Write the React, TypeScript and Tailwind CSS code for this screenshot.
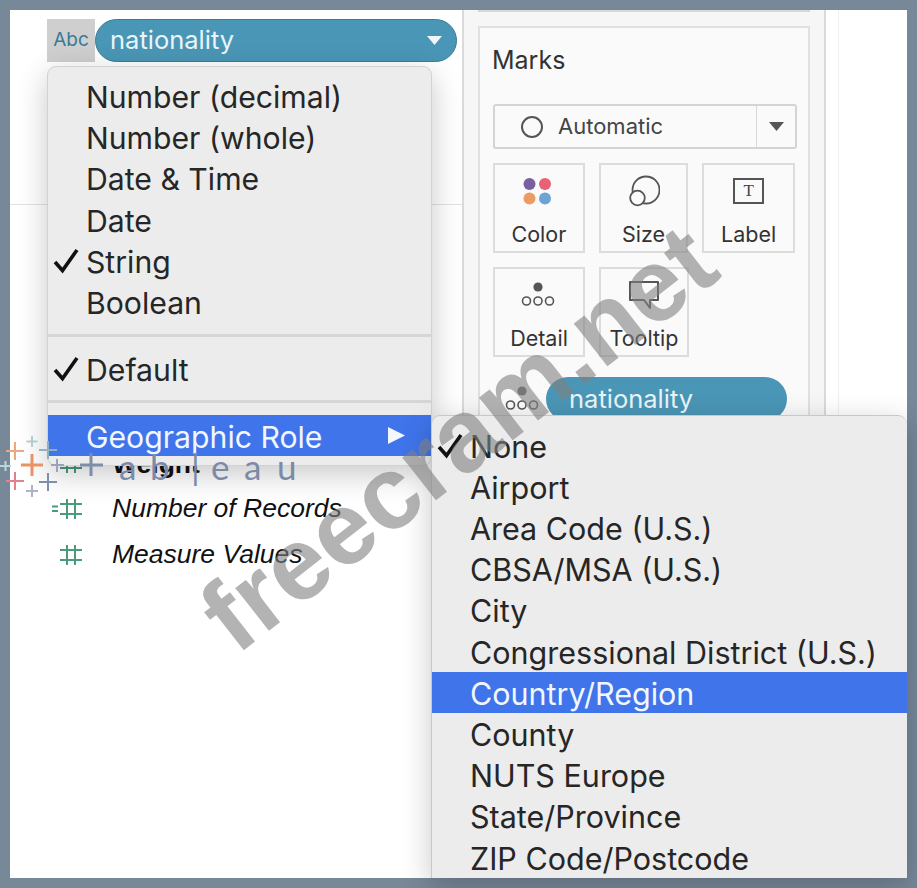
const inter = "font-['Inter','Liberation_Sans',sans-serif]";

function Hash({ withEq = false }: { withEq?: boolean }) {
  return (
    <svg width="32" height="24" viewBox="0 0 32 24" fill="none" stroke="#4a9a7c" strokeWidth="2">
      {withEq && <path d="M0 9.5h6M0 14h6" stroke="#4a9a7c" strokeWidth="1.8" />}
      <path d="M8 7h22M8 17h22M15 2v20M23 2v20" />
    </svg>
  );
}

function Tick({ size = 28 }: { size?: number }) {
  return (
    <svg width={size} height={size} viewBox="0 0 28 28" fill="none" stroke="#111" strokeWidth="3.6">
      <path d="M3 15l7.5 8.5L25 3" />
    </svg>
  );
}

function DetailIcon({ dark = "#555" }: { dark?: string }) {
  return (
    <svg width="36" height="28" viewBox="0 0 36 28" fill="none" stroke="#555" strokeWidth="1.6">
      <circle cx="18" cy="6" r="4.6" fill={dark} stroke="none" />
      <circle cx="6.500" cy="20" r="4" />
      <circle cx="18" cy="20" r="4" />
      <circle cx="29.500" cy="20" r="4" />
    </svg>
  );
}

function MarkButton({ label, icon, w, nudge }: { label: string; icon: React.ReactNode; w: string; nudge?: boolean }) {
  return (
    <div className={`${w} h-[90px] border-2 border-[#dcdcdc] flex flex-col items-center pt-[7px]`}>
      <div className={`h-[38px] flex items-center justify-center ${nudge ? "-ml-[3px]" : ""}`}>{icon}</div>
      <div className="text-[21.500px] leading-[30px] text-[#333] mt-[9px]">{label}</div>
    </div>
  );
}

function MenuItem({ label, tick, active, arrow, size = "text-[30.200px]", textTop = "pt-[4px]" }: { label: string; tick?: boolean; active?: boolean; arrow?: boolean; size?: string; textTop?: string }) {
  return (
    <div className={`relative h-[41.2px] flex items-center pl-[38px] pr-[26px] ${size} whitespace-nowrap ${active ? "bg-[#3f74ea] text-[#f2f6ff]" : "text-[#262626]"}`}>
      {tick && <span className="absolute left-[4px] top-[7px]"><Tick /></span>}
      <span className={`flex-1 ${textTop}`}>{label}</span>
      {arrow && (
        <svg width="17" height="17" viewBox="0 0 17 17" fill="#f4f7ff"><path d="M0 0l17 8.500L0 17z" /></svg>
      )}
    </div>
  );
}

function Sep() {
  return <div className="h-[3px] bg-[#d6d6d6] my-[11.4px]" />;
}

function Geo({ label, tick, active }: { label: string; tick?: boolean; active?: boolean }) {
  return <MenuItem label={label} tick={tick} active={active} size="text-[30.500px]" textTop="pt-[2px]" />;
}

const geo = ["Airport", "Area Code (U.S.)", "CBSA/MSA (U.S.)", "City", "Congressional District (U.S.)"];
const geo2 = ["County", "NUTS Europe", "State/Province", "ZIP Code/Postcode"];

export default function App() {
  return (
    <div className={`relative w-[917px] h-[888px] bg-[#778899] overflow-hidden ${inter}`}>
      <div className="absolute inset-[10px] bg-white overflow-hidden flex">
        {/* left column */}
        <div className="w-[452px] shrink-0">
          <div className="flex h-[43px] mt-[9px] ml-[37px] w-[410px]">
            <div className="w-[48px] bg-[#cfcfcf] flex items-center justify-center text-[19px] text-[#3a7a96]">Abc</div>
            <div className="flex-1 rounded-full bg-[#4a96b6] border border-[#3a7c96] flex items-center pl-[14px] pr-[14px] text-[25.500px] text-[#e9f5f9]">
              <span className="flex-1">nationality</span>
              <svg width="15" height="9" viewBox="0 0 15 9" fill="#f2f6f8"><path d="M0 0h15L7.500 9z" /></svg>
            </div>
          </div>
          <div className="h-px bg-[#e2e2e2] mt-[142px]" />
          <div className="mt-[235px] pl-[42px] font-['Liberation_Sans',sans-serif] text-[26.500px] text-[#111]">
            <div className="h-[46px] flex items-center gap-[28px] font-bold">
              <Hash /><span className="pt-[3px]">Weight</span>
            </div>
            <div className="h-[46px] flex items-center gap-[28px] italic">
              <Hash withEq /><span>Number of Records</span>
            </div>
            <div className="h-[46px] flex items-center gap-[28px] italic">
              <Hash /><span>Measure Values</span>
            </div>
          </div>
        </div>

        {/* marks panel */}
        <div className="w-[364px] shrink-0 bg-[#f6f6f6] border-x-2 border-[#dadada] px-[14px]">
          <div className="h-[2px] bg-[#d8d8d8]" />
          <div className="mt-[14px] h-[500px] border-2 border-[#e0e0e0] bg-[#fafafa] px-[13px] pt-[14px]">
            <div className="text-[25px] leading-[36px] text-[#333] -ml-[1px]">Marks</div>
            <div className="mt-[26px] h-[45px] w-[304px] border-2 border-[#d4d4d4] rounded-[3px] flex items-center text-[22px] text-[#444]">
              <div className="flex-1 h-full flex items-center pl-[26px] gap-[15px] border-r border-[#d8d8d8]">
                <span className="w-[22px] h-[22px] rounded-full border-2 border-[#555]" />
                <span>Automatic</span>
              </div>
              <div className="w-[38px] flex justify-center">
                <svg width="15" height="9" viewBox="0 0 15 9" fill="#555"><path d="M0 0h15L7.500 9z" /></svg>
              </div>
            </div>
            <div className="mt-[14px] flex gap-[14px]">
              <MarkButton w="w-[92px]" nudge label="Color" icon={
                <svg width="30" height="30" viewBox="0 0 30 30">
                  <circle cx="7.500" cy="8" r="6" fill="#7a5fa0" />
                  <circle cx="23" cy="8" r="6" fill="#ea6074" />
                  <circle cx="7.500" cy="22.500" r="6" fill="#ec9c62" />
                  <circle cx="23" cy="22.500" r="6" fill="#6fa3d4" />
                </svg>
              } />
              <MarkButton w="w-[90px]" label="Size" icon={
                <svg width="32" height="32" viewBox="0 0 32 32" fill="none" stroke="#555" strokeWidth="1.8">
                  <circle cx="18" cy="15" r="13.500" />
                  <circle cx="9.500" cy="23" r="7.300" fill="#fafafa" />
                </svg>
              } />
              <MarkButton w="w-[93px]" label="Label" icon={
                <div className="w-[31px] h-[26px] border-2 border-[#555] flex items-center justify-center font-['Liberation_Serif',serif] text-[17px] text-[#444]">T</div>
              } />
            </div>
            <div className="mt-[14px] flex gap-[14px]">
              <MarkButton w="w-[92px]" nudge label="Detail" icon={<DetailIcon />} />
              <MarkButton w="w-[90px]" label="Tooltip" icon={
                <svg width="32" height="30" viewBox="0 0 32 30" fill="none" stroke="#555" strokeWidth="2">
                  <path d="M2 2h28v18H22v8l-6-8H2z" strokeLinejoin="round" />
                </svg>
              } />
            </div>
            <div className="mt-[20px] flex items-center gap-[6px] ml-[11px]">
              <DetailIcon dark="#666" />
              <div className="w-[241px] h-[44px] rounded-full bg-[#4a96b6] pl-[23px] flex items-center text-[25.500px] text-[#e9f5f9]">nationality</div>
            </div>
          </div>
        </div>

        <div className="w-[12px] shrink-0" />
        <div className="w-px bg-[#f0f0f0]" />
      </div>

      {/* first menu */}
      <div className="absolute left-[47px] top-[66px] w-[385px] h-[400px] bg-[#ececec] border border-[#d2d2d2] rounded-[9px] shadow-[0_8px_30px_rgba(0,0,0,0.22)] pt-[8px] overflow-hidden">
        <MenuItem label="Number (decimal)" />
        <MenuItem label="Number (whole)" />
        <MenuItem label="Date & Time" />
        <MenuItem label="Date" />
        <MenuItem label="String" tick />
        <MenuItem label="Boolean" />
        <Sep />
        <MenuItem label="Default" tick />
        <Sep />
        <MenuItem label="Geographic Role" active arrow />
      </div>

      {/* second menu */}
      <div className="absolute left-[431px] top-[415px] w-[476px] h-[463px] bg-[#ececec] border-l border-t border-[#c8c8c8] rounded-t-[9px] shadow-[0_8px_30px_rgba(0,0,0,0.22)] pt-[9px] overflow-hidden">
        <Geo label="None" tick />
        {geo.map((g) => <Geo key={g} label={g} />)}
        <Geo label="Country/Region" active />
        {geo2.map((g) => <Geo key={g} label={g} />)}
      </div>

      {/* tableau logo overlay */}
      <div className="absolute left-0 top-[433px] flex items-start">
        <svg width="112" height="66" viewBox="0 0 112 66" fill="none" strokeWidth="2">
          <path d="M26.500 8.500h11M32 3v11" stroke="#b4cbd0" />
          <path d="M15 9v18M6 18h18" stroke="#eea77c" />
          <path d="M48 8v18M39 17h18" stroke="#8fb0c0" />
          <path d="M32 21v22M21 32h22" stroke="#ea9166" strokeWidth="3" />
          <path d="M0 33h11M5.500 28v10" stroke="#bcd5dc" />
          <path d="M15 39v18M6 48h18" stroke="#e58088" />
          <path d="M48 40v18M39 49h18" stroke="#7f8fab" />
          <path d="M32 52v12M26 58h12" stroke="#b2b2c6" />
          <path d="M57 26v13M51 32h13" stroke="#99a4bb" />
          <path d="M91 20v23M80 32h23" stroke="#7d8eab" strokeWidth="3" />
        </svg>
      </div>
      <div className="absolute left-[119px] top-[446px] flex text-[35px] leading-[40px] font-['Lato',sans-serif] text-[#7b8aa8] whitespace-nowrap">
        <span className="w-[31px]">a</span>
        <span className="w-[41px]">b</span>
        <span className="w-[20px]">|</span>
        <span className="w-[33px]">e</span>
        <span className="w-[33px]">a</span>
        <span>u</span>
      </div>

      {/* watermark */}
      <div className="absolute left-[458px] top-[438px] -translate-x-1/2 -translate-y-1/2 -rotate-[38deg] font-['Liberation_Sans',sans-serif] font-bold text-[103px] leading-none text-[#808080]/60 whitespace-nowrap">freecram.net</div>
    </div>
  );
}
